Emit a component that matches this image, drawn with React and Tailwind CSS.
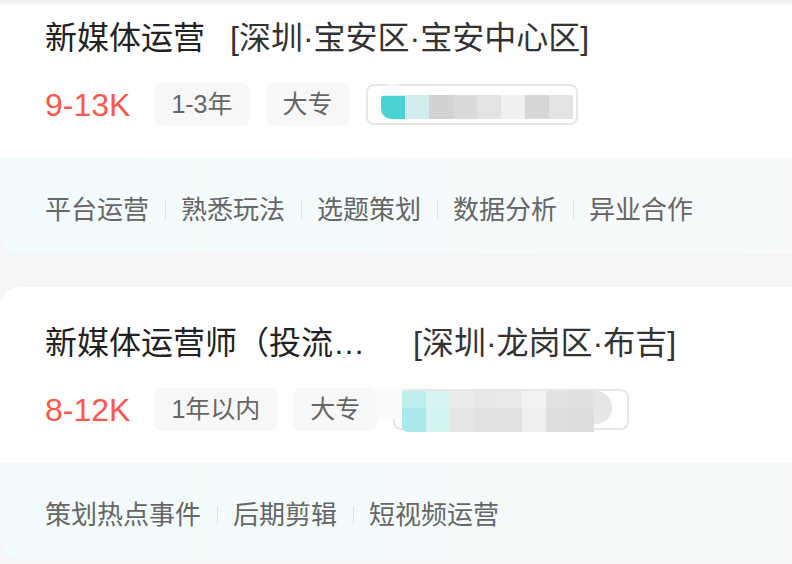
import React from "react";

const FONT = { fontFamily: '"Liberation Sans", "Noto Sans CJK SC", sans-serif' };

function Badge({ children }) {
  return (
    <div className="h-[43px] px-[17px] flex items-center rounded-[8px] bg-[#f7f7f8] text-[25px] leading-none text-[#666666]">
      {children}
    </div>
  );
}

function Mosaic1() {
  const cols = ["#4bd3d3", "#d1ecec", "#d2d2d2", "#dadada", "#e3e3e3", "#f0f0f0", "#d6d6d6", "#e3e3e3"];
  return (
    <div className="relative w-[212px] h-[41px] rounded-[8px] border-2 border-[#e6e6e6] bg-white">
      <div className="absolute left-[13px] top-[9px] flex">
        {cols.map((c, i) => (
          <div
            key={i}
            className={i === 0 ? "w-[24px] h-[24px] rounded-bl-[10px] rounded-tl-[4px]" : "w-[24px] h-[24px]"}
            style={{ background: c }}
          />
        ))}
      </div>
      <div className="absolute left-[12px] top-[-2px] w-[26px] h-[12px] rounded-t-full bg-[#f6fbfb] opacity-80" />
    </div>
  );
}

function Mosaic2() {
  const top = ["#bdeeee", "#d8f4f4", "#ebebeb", "#e8e8e8", "#eaeaea", "#f3f3f3", "#e2e2e2", "#e0e0e0"];
  const bot = ["#a8e8e8", "#d3f2f2", "#e5e5e5", "#e1e1e1", "#e2e2e2", "#f0f0f0", "#dedede", "#dcdcdc"];
  return (
    <div className="relative w-[236px] h-[41px] rounded-[8px] border-2 border-[#e6e6e6] bg-white">
      <div className="absolute left-[-18px] top-[-2px] w-[27px] h-[30px] bg-[#fafafa]" />
      <div className="absolute left-[7px] top-[0px] flex flex-col">
        <div className="flex">
          {top.map((c, i) => (
            <div key={i} className="w-[24px] h-[17px]" style={{ background: c }} />
          ))}
          <div className="w-[18px] h-[17px] rounded-tr-[16px] bg-[#e6e6e6]" />
        </div>
        <div className="flex">
          {bot.map((c, i) => (
            <div
              key={i}
              className={i === 0 ? "w-[24px] h-[24px] rounded-bl-[6px]" : "w-[24px] h-[24px]"}
              style={{ background: c }}
            />
          ))}
          <div className="w-[18px] h-[16px] rounded-br-[16px] bg-[#e6e6e6]" />
        </div>
      </div>
    </div>
  );
}

function Tags({ items }) {
  return (
    <div className="flex items-center text-[26px] leading-none text-[#666666]">
      {items.map((t, i) => (
        <React.Fragment key={t}>
          {i > 0 && <span className="w-px h-[18px] mx-[15.5px] bg-[#e0e0e0]" />}
          <span>{t}</span>
        </React.Fragment>
      ))}
    </div>
  );
}

function Card({ title, titleGap, location, salary, badges, mosaic, tags, className }) {
  return (
    <div className={"bg-white rounded-l-[20px] overflow-hidden " + (className || "")}>
      <div className="h-[176px] px-[45px] pt-[36px]">
        <div className="h-[40px] flex items-center text-[32px] leading-none text-[#222222] whitespace-nowrap">
          <span>{title}</span>
          <span style={{ marginLeft: titleGap }} className="text-[#333333]">{location}</span>
        </div>
        <div className="mt-[25px] flex items-center">
          <span className="text-[32px] leading-none text-[#fe574a] mr-[24px]">{salary}</span>
          <div className="flex items-center gap-[16px]">
            {badges.map((b) => (
              <Badge key={b}>{b}</Badge>
            ))}
            {mosaic}
          </div>
        </div>
      </div>
      <div className="h-[96px] px-[45px] pt-[7px] flex items-center rounded-bl-[20px] bg-gradient-to-r from-[#f1fbfb] to-[#f7f9fa]">
        <Tags items={tags} />
      </div>
    </div>
  );
}

export default function App() {
  return (
    <div className="relative w-[792px] h-[564px] overflow-hidden bg-[#f5f5f7]" style={FONT}>
      <div className="mt-[-18px] flex flex-col gap-[33px]">
        <Card
          title="新媒体运营"
          titleGap="25px"
          location="[深圳·宝安区·宝安中心区]"
          salary="9-13K"
          badges={["1-3年", "大专"]}
          mosaic={<Mosaic1 />}
          tags={["平台运营", "熟悉玩法", "选题策划", "数据分析", "异业合作"]}
        />
        <Card
          title="新媒体运营师（投流…"
          titleGap="48px"
          location="[深圳·龙岗区·布吉]"
          salary="8-12K"
          badges={["1年以内", "大专"]}
          mosaic={<Mosaic2 />}
          tags={["策划热点事件", "后期剪辑", "短视频运营"]}
        />
      </div>
      <div className="absolute left-0 top-0 w-full h-[6px] bg-gradient-to-b from-[#eeeef0] to-transparent" />
    </div>
  );
}
